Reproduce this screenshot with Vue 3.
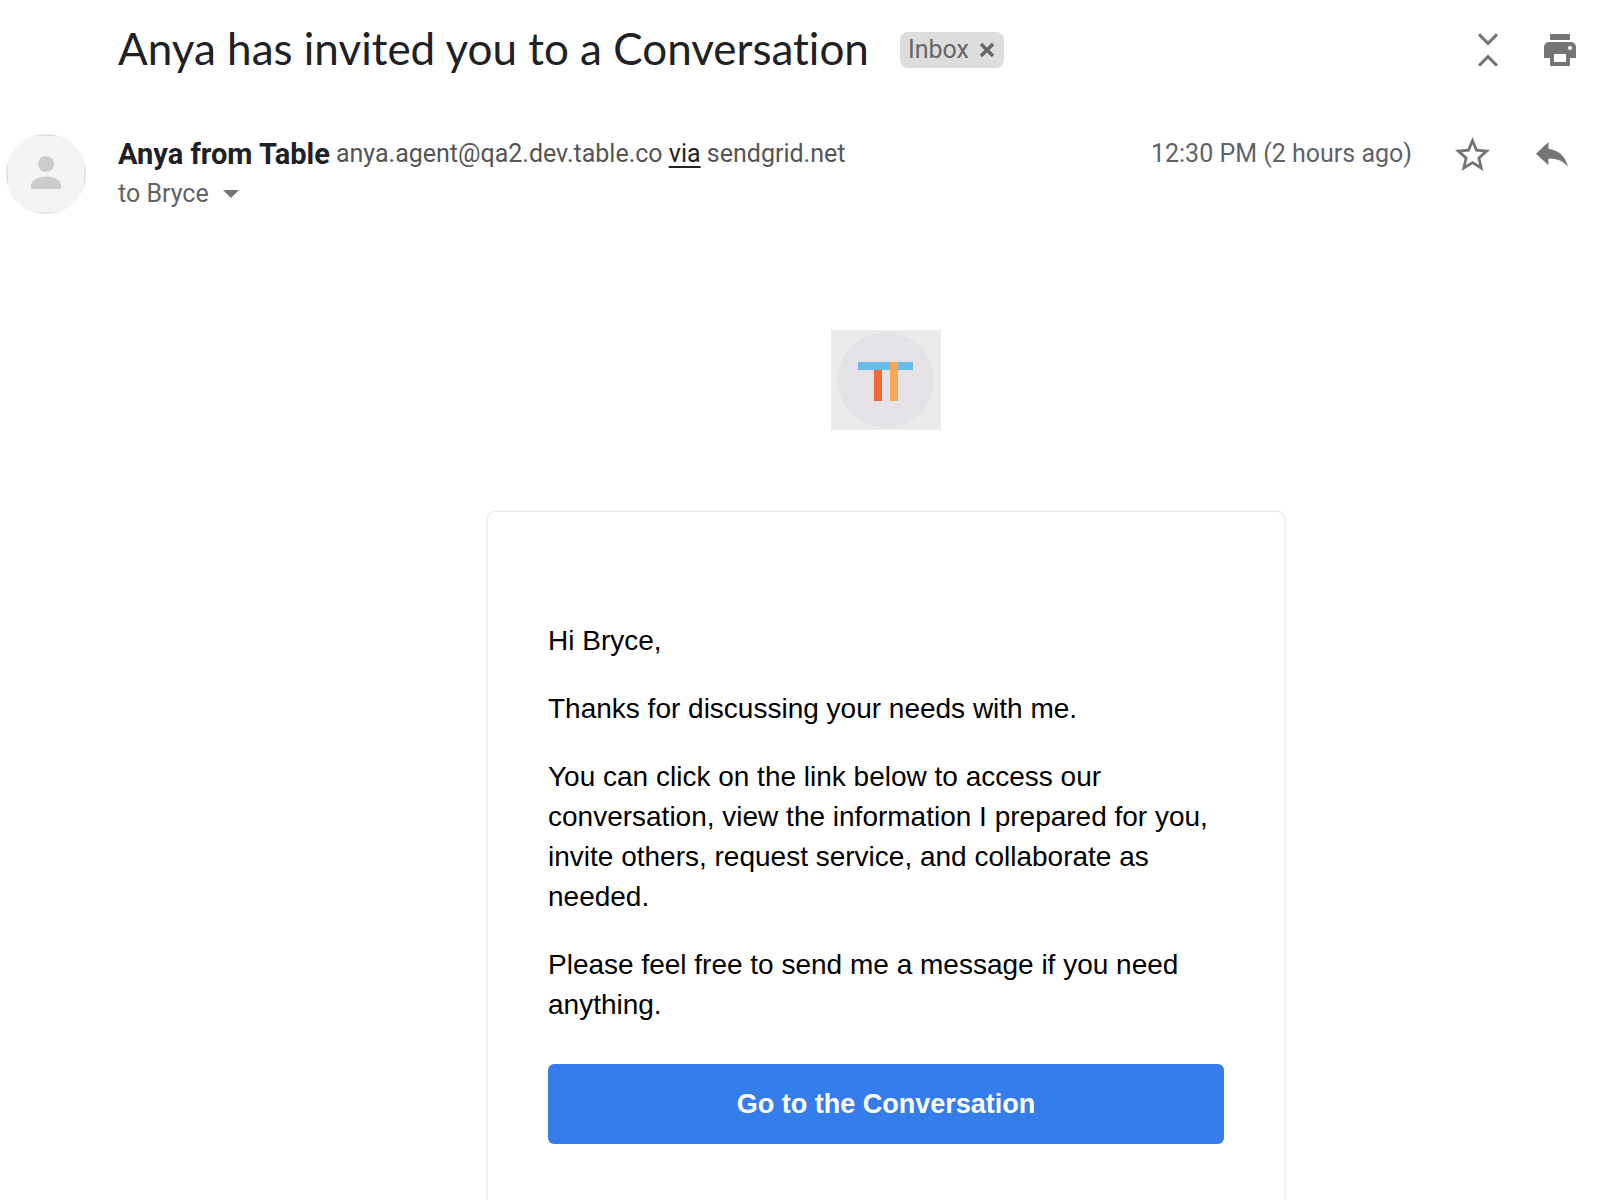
<script setup>
const paragraphs = [
  'Hi Bryce,',
  'Thanks for discussing your needs with me.',
  'You can click on the link below to access our conversation, view the information I prepared for you, invite others, request service, and collaborate as needed.',
  'Please feel free to send me a message if you need anything.'
]
</script>

<template>
  <main class="message">
    <header class="subject">
      <h1 class="title">Anya has invited you to a Conversation</h1>
      <span class="chip">
        Inbox
        <button class="icon" type="button" aria-label="Remove label Inbox">
          <svg width="14" height="14" viewBox="0 0 14 14" stroke="#666" stroke-width="3.4"><path d="M1 1l12 12M13 1L1 13" /></svg>
        </button>
      </span>
      <div class="tools">
        <button class="icon" type="button" aria-label="Collapse all">
          <svg width="20" height="34" viewBox="0 0 20 34" fill="none" stroke="#757575" stroke-width="3"><path d="M1 1.3l9 9 9-9M1 32.7l9-9 9 9" /></svg>
        </button>
        <button class="icon" type="button" aria-label="Print all">
          <svg width="32" height="32" viewBox="0 0 32 32" fill="#757575">
            <path d="M6 0h20v6H6z" />
            <path fill-rule="evenodd" d="M5 8h22a5 5 0 0 1 5 5v11h-6v8H6v-8H0V13a5 5 0 0 1 5-5zM10 20v8h12v-8zM26 12a2 2 0 1 0 0 4 2 2 0 0 0 0-4z" />
          </svg>
        </button>
      </div>
    </header>

    <section class="sender">
      <svg class="avatar" width="80" height="80" viewBox="0 0 80 80" role="img" aria-label="Anya from Table">
        <clipPath id="avatar-clip"><circle cx="40" cy="40" r="40" /></clipPath>
        <g clip-path="url(#avatar-clip)">
          <path fill="#e2e2e2" d="M0 0h80v80H0z" />
          <rect x="2" y="2" width="76" height="76" rx="2" fill="#f4f4f4" />
          <circle cx="40" cy="30" r="8" fill="#ccc" />
          <path fill="#ccc" d="M25 55v-4c0-5 8-8.500 15-8.500s15 3.500 15 8.500v4z" />
        </g>
      </svg>
      <div class="who">
        <div class="line">
          <strong class="name">Anya from Table</strong>
          <span class="address">anya.agent@qa2.dev.table.co <a href="#">via</a> sendgrid.net</span>
        </div>
        <button class="recipient" type="button">
          to Bryce
          <svg width="16" height="8" viewBox="0 0 16 8" fill="#757575"><path d="M0 0h16L8 8z" /></svg>
        </button>
      </div>
      <div class="meta">
        <time>12:30 PM (2 hours ago)</time>
        <button class="icon star" type="button" aria-label="Star">
          <svg width="35" height="34" viewBox="2 2 20 19" preserveAspectRatio="none" fill="#757575"><path d="M22 9.240l-7.190-.62L12 2 9.190 8.630 2 9.240l5.460 4.730L5.820 21 12 17.270 18.180 21l-1.630-7.030L22 9.240zM12 15.400l-3.760 2.270 1-4.280-3.320-2.880 4.380-.38L12 6.100l1.710 4.040 4.380.38-3.320 2.880 1 4.280L12 15.400z" /></svg>
        </button>
        <button class="icon" type="button" aria-label="Reply">
          <svg width="32" height="25" viewBox="3 5 18 15" preserveAspectRatio="none" fill="#757575"><path d="M10 9V5l-7 7 7 7v-4.100c5 0 8.500 1.600 11 5.100-1-5-4-10-11-11z" /></svg>
        </button>
      </div>
    </section>

    <section class="body">
      <svg class="logo" width="110" height="100" viewBox="0 0 110 100" role="img" aria-label="Table">
        <path fill="#ebebeb" d="M0 0h110v100H0z" />
        <ellipse cx="55" cy="50" rx="48" ry="47.500" fill="#e4e2e6" />
        <path fill="#69bce8" d="M27 32h55v8H27z" />
        <path fill="#ed6b31" d="M43 40h8v31h-8z" />
        <path fill="#f8a854" d="M59 32h8v39h-8z" />
      </svg>
      <article class="card">
        <p v-for="text in paragraphs" :key="text">{{ text }}</p>
        <a class="cta" href="#">Go to the Conversation</a>
      </article>
    </section>
  </main>
</template>

<style>
body {
  margin: 0;
  background: #fff;
}
</style>

<style scoped>
.message {
  display: flex;
  flex-direction: column;
  box-sizing: border-box;
  min-height: 100vh;
  padding-top: 20px;
  font-family: Roboto, "Liberation Sans", sans-serif;
  font-size: 25px;
  line-height: 40px;
  color: #5f6368;
}
button {
  padding: 0;
  border: 0;
  background: none;
  font: inherit;
  color: inherit;
  cursor: pointer;
}
svg {
  display: block;
  flex: none;
}
.icon {
  display: flex;
}
.subject {
  display: flex;
  align-items: center;
  height: 60px;
  padding: 0 24px 0 118px;
}
.title {
  margin: 0;
  padding-bottom: 4px;
  font-family: Lato, sans-serif;
  font-size: 44px;
  font-weight: 400;
  font-variant-ligatures: none;
  line-height: 56px;
  color: #202124;
}
.chip {
  display: flex;
  align-items: center;
  gap: 11px;
  height: 36px;
  margin-left: 31px;
  padding: 0 10px 0 8px;
  border-radius: 8px;
  background: #ddd;
  color: #666;
}
.tools {
  display: flex;
  align-items: center;
  gap: 46px;
  margin-left: auto;
}
.sender {
  display: flex;
  align-items: flex-start;
  height: 80px;
  padding: 54px 32px 0 6px;
}
.who {
  margin-left: 32px;
}
.line {
  display: flex;
  align-items: center;
  gap: 6px;
  height: 40px;
}
.name {
  font-size: 29px;
  color: #202124;
}
.address {
  color: #555;
}
.address a {
  color: #222;
  text-underline-offset: 4px;
}
.recipient {
  display: flex;
  align-items: center;
  gap: 14px;
}
.meta {
  display: flex;
  align-items: center;
  height: 40px;
  margin-left: auto;
}
.star {
  margin: 0 46px 0 43px;
}
.body {
  display: flex;
  flex: 1;
  flex-direction: column;
  align-items: center;
  gap: 80px;
  padding: 116px 0 0 172px;
}
.card {
  flex: 1;
  box-sizing: border-box;
  width: 100%;
  max-width: 800px;
  padding: 109px 60px 54px;
  border: 2px solid #edeff3;
  border-bottom: 0;
  border-radius: 10px 10px 0 0;
  font-family: "Liberation Sans", Arial, sans-serif;
  font-size: 28px;
  color: #000;
}
.card p {
  margin: 0 0 28px;
}
.cta {
  display: block;
  margin-top: 39px;
  border-radius: 6px;
  background: #347deb;
  font-size: 27px;
  font-weight: 700;
  line-height: 80px;
  text-align: center;
  text-decoration: none;
  color: #fff;
}
</style>
